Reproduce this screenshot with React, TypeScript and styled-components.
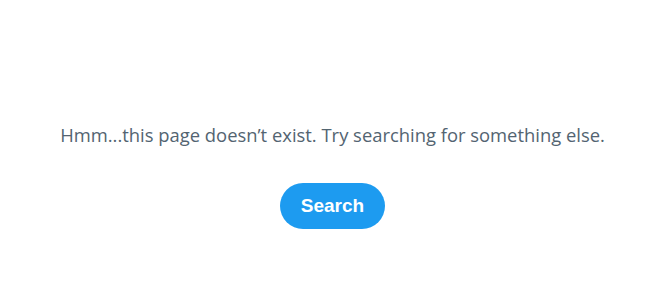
import React from "react";
import styled, { createGlobalStyle } from "styled-components";

const GlobalStyle = createGlobalStyle`
    html, body {
        margin: 0;
        padding: 0;
        background: #ffffff;
    }
    body {
        font-family: "Open Sans", "Noto Sans", "Liberation Sans", sans-serif;
    }
`

const Page = styled.main`
    display: flex;
    flex-direction: column;
    align-items: center;
    padding-top: 123px;
    min-height: 291px;
    box-sizing: border-box;
`

const Message = styled.p`
    margin: 0;
    font-size: 18.4px;
    line-height: 24px;
    color: #536471;
    text-align: center;
`

const SearchButton = styled.button`
    margin-top: 36px;
    width: 105px;
    height: 46px;
    padding: 0;
    border: none;
    border-radius: 9999px;
    background-color: #1d9bf0;
    color: #ffffff;
    font-family: "Liberation Sans", Arial, sans-serif;
    font-size: 19px;
    font-weight: 700;
    cursor: pointer;
`

export default function App() {
    return (
        <>
            <GlobalStyle/>
            <Page>
                <Message>Hmm...this page doesn’t exist. Try searching for something else.</Message>
                <SearchButton>Search</SearchButton>
            </Page>
        </>
    );
}
